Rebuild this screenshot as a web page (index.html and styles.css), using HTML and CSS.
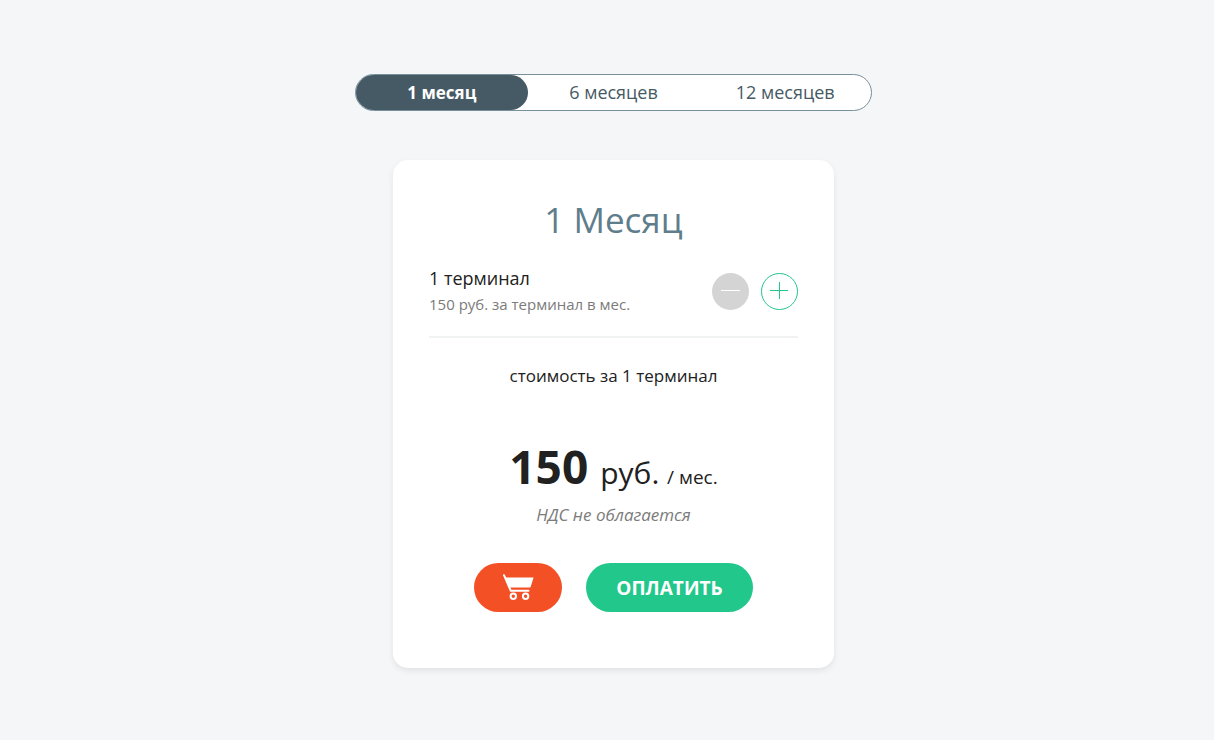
FILE: index.html
```html
<!DOCTYPE html>
<html lang="ru">
<head>
<meta charset="utf-8">
<meta name="viewport" content="width=device-width, initial-scale=1">
<title>Тарифы</title>
<link rel="stylesheet" href="styles.css">
</head>
<body>
<main class="pricing">
  <nav class="periods">
    <button type="button" class="period period-active" aria-pressed="true">1 месяц</button>
    <button type="button" class="period" aria-pressed="false">6 месяцев</button>
    <button type="button" class="period" aria-pressed="false">12 месяцев</button>
  </nav>
  <section class="card">
    <h1 class="title">1 Месяц</h1>
    <div class="terminals">
      <div class="info">
        <div class="count">1 терминал</div>
        <div class="rate">150 руб. за терминал в мес.</div>
      </div>
      <div class="stepper">
        <button type="button" class="step step-minus" aria-label="Убавить" disabled>
          <svg class="step-icon" viewBox="0 0 19 19"><path d="M0 8.5H19"/></svg>
        </button>
        <button type="button" class="step step-plus" aria-label="Добавить">
          <svg class="step-icon" viewBox="0 0 19 19"><path d="M0 8.5H18M9.5 0V17"/></svg>
        </button>
      </div>
    </div>
    <p class="caption">стоимость за 1 терминал</p>
    <p class="price"><strong class="amount">150 </strong><span class="currency">руб.</span> <span class="per">/ мес.</span></p>
    <p class="tax">НДС не облагается</p>
    <div class="actions">
      <button type="button" class="cart" aria-label="В корзину">
        <svg class="cart-icon" viewBox="0 0 32 28">
          <path class="cart-basket" d="M3 3.5H31.6L28.6 12.9Q28.4 13.6 27.6 13.6H8Z"/>
          <path class="cart-line" d="M2 1.2L8.8 16.8H26.5"/>
          <circle class="cart-line" cx="11.3" cy="22.2" r="2.7"/>
          <circle class="cart-line" cx="23.6" cy="22.2" r="2.7"/>
        </svg>
      </button>
      <button type="button" class="pay">ОПЛАТИТЬ</button>
    </div>
  </section>
</main>
</body>
</html>
```
FILE: styles.css
```css
* {
  box-sizing: border-box;
}

body {
  margin: 0;
  background: #f4f6f8;
  color: #212121;
  font-family: "Open Sans", "Noto Sans", sans-serif;
}

button {
  padding: 0;
  border: 0;
  font-family: inherit;
  cursor: pointer;
}

.pricing {
  display: flex;
  flex-direction: column;
  align-items: center;
  gap: 49px;
  padding: 74px 0 71px 13px;
}

.periods {
  display: flex;
  width: 100%;
  max-width: 517px;
  border: 1px solid #78909c;
  border-radius: 19px;
  background: #fff;
}

.period {
  flex: 1;
  border-radius: 18px;
  background: transparent;
  color: #455a64;
  font-size: 17px;
  font-weight: 600;
  line-height: 35px;
}

.period:not(.period-active) {
  font-size: 18px;
  font-weight: 500;
}

.period-active {
  background: #455a64;
  color: #fff;
  font-weight: 700;
}

.card {
  width: 100%;
  max-width: 441px;
  padding: 36px 36px 56px;
  border-radius: 15px;
  background: #fff;
  box-shadow: 0 3px 6px rgba(0, 0, 0, 0.08);
  text-align: center;
}

.title {
  margin: 0;
  color: #607d8b;
  font-size: 35px;
  font-weight: 400;
  line-height: 48px;
}

.terminals {
  display: flex;
  align-items: center;
  justify-content: space-between;
  padding: 21px 0 19px;
  border-bottom: 2px solid #f1f2f2;
  text-align: left;
}

.count {
  font-size: 18px;
  font-weight: 500;
  line-height: 26px;
}

.rate {
  color: #7b7b7b;
  font-size: 15px;
  line-height: 26px;
}

.stepper {
  display: flex;
  gap: 12px;
}

.step {
  display: flex;
  align-items: center;
  justify-content: center;
  width: 37px;
  height: 37px;
  border-radius: 50%;
}

.step-minus {
  background: #d4d4d4;
  color: #fff;
}

.step-plus {
  border: 1px solid #22c78b;
  background: #fff;
  color: #22c78b;
}

.step-icon {
  width: 19px;
  height: 19px;
  fill: none;
  stroke: #fff;
}

.step-plus .step-icon {
  stroke: #22c78b;
}

.caption {
  margin: 24px 0 0;
  font-size: 17px;
  line-height: 28px;
}

.price {
  margin: 46px 0 0;
  font-size: 30px;
  line-height: 1;
}

.amount {
  font-size: 46px;
  font-weight: 700;
  line-height: 60px;
}

.per {
  font-size: 19px;
}

.tax {
  margin: 5px 0 0;
  color: #7b7b7b;
  font-size: 17px;
  font-style: italic;
  line-height: 28px;
}

.actions {
  display: flex;
  justify-content: center;
  gap: 24px;
  margin-top: 34px;
}

.cart,
.pay {
  display: flex;
  align-items: center;
  justify-content: center;
  height: 49px;
  border-radius: 25px;
  color: #fff;
}

.cart {
  padding: 0 28px;
  background: #f35125;
}

.cart-icon {
  width: 32px;
  height: 28px;
}

.cart-basket {
  fill: currentColor;
}

.cart-line {
  fill: none;
  stroke: currentColor;
  stroke-width: 2;
  stroke-linecap: round;
  stroke-linejoin: round;
}

.pay {
  padding: 0 30px;
  background: #22c78b;
  font-size: 19px;
  font-weight: 700;
}
```
